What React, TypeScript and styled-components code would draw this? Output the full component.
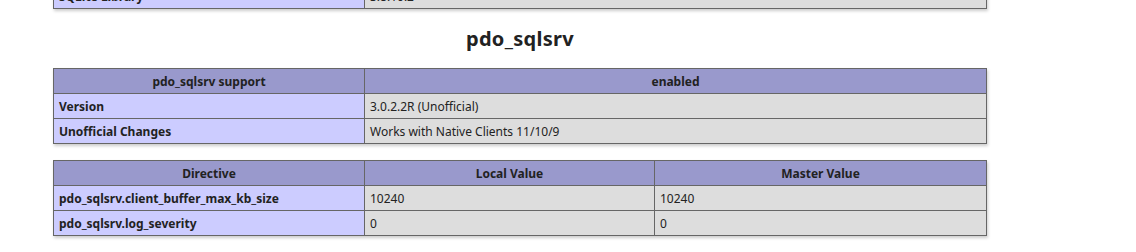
import * as React from 'react';
import styled, { createGlobalStyle } from 'styled-components';

const GlobalStyle = createGlobalStyle`
    html, body {
        margin: 0;
        padding: 0;
        background: #fff;
        color: #222;
        font-family: 'Noto Sans', 'Noto Sans CJK SC', sans-serif;
    }
`;

const Page = styled.div`
    width: 1040px;
    text-align: center;
    margin-top: -33px;
`;

const Title = styled.h2`
    font-size: 20px;
    font-weight: bold;
    margin: 17px 0 16px;
    line-height: 26px;
    letter-spacing: 0.3px;
`;

const Table = styled.table`
    border-collapse: collapse;
    border: 0;
    width: 934px;
    margin: 16px auto;
    text-align: left;
    box-shadow: 1px 2px 3px #ccc;
    font-size: 12px;
`;

const Head = styled.th<{ $w?: number }>`
    background-color: #99c;
    border: 1px solid #666;
    padding: 5px 5px 3px;
    font-weight: bold;
    text-align: center;
    line-height: 16px;
    height: 16px;
    ${(p) => (p.$w ? `width: ${p.$w}px;` : '')}
`;

const Key = styled.td`
    background-color: #ccf;
    border: 1px solid #666;
    padding: 5px 5px 3px;
    width: 300px;
    font-weight: bold;
    line-height: 16px;
    height: 16px;
`;

const Value = styled.td<{ $w?: number }>`
    background-color: #ddd;
    border: 1px solid #666;
    padding: 5px 5px 3px;
    line-height: 16px;
    height: 16px;
    ${(p) => (p.$w ? `width: ${p.$w}px;` : '')}
`;

const App = () => {
    return (
        <Page>
            <GlobalStyle />
            <Table>
                <tbody>
                    <tr>
                        <Key>SQLite Library</Key>
                        <Value>3.8.10.2</Value>
                    </tr>
                </tbody>
            </Table>
            <Title>pdo_sqlsrv</Title>
            <Table>
                <tbody>
                    <tr>
                        <Head>pdo_sqlsrv support</Head>
                        <Head>enabled</Head>
                    </tr>
                    <tr>
                        <Key>Version</Key>
                        <Value>3.0.2.2R (Unofficial)</Value>
                    </tr>
                    <tr>
                        <Key>Unofficial Changes</Key>
                        <Value>Works with Native Clients 11/10/9</Value>
                    </tr>
                </tbody>
            </Table>
            <Table>
                <tbody>
                    <tr>
                        <Head $w={300}>Directive</Head>
                        <Head $w={279}>Local Value</Head>
                        <Head>Master Value</Head>
                    </tr>
                    <tr>
                        <Key>pdo_sqlsrv.client_buffer_max_kb_size</Key>
                        <Value $w={279}>10240</Value>
                        <Value>10240</Value>
                    </tr>
                    <tr>
                        <Key>pdo_sqlsrv.log_severity</Key>
                        <Value $w={279}>0</Value>
                        <Value>0</Value>
                    </tr>
                </tbody>
            </Table>
        </Page>
    );
};

export default App;
